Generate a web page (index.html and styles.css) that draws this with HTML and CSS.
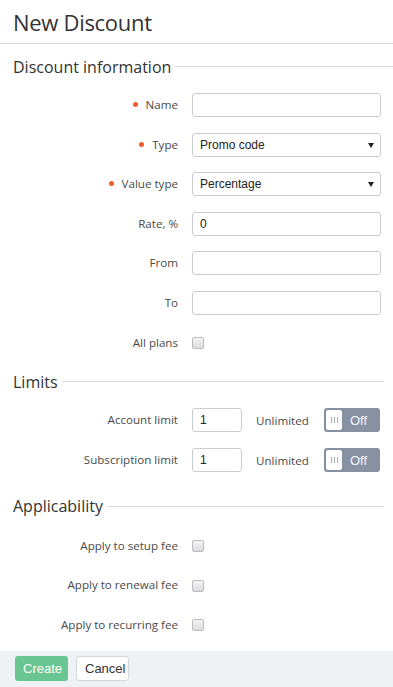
FILE: index.html
```html
<!DOCTYPE html>
<html lang="en">

<head>
    <meta charset="UTF-8">
    <link rel="stylesheet" href="styles.css">
    <title>New Discount</title>
</head>

<body>
    <div class="page-header">
        <h1>New Discount</h1>
    </div>

    <form class="discount-form">
        <div class="section">
            <div class="legend legend-wide"><span>Discount information</span></div>

            <div class="row">
                <label class="required" for="name">Name</label>
                <input type="text" id="name" name="name">
            </div>
            <div class="row">
                <label class="required" for="type">Type</label>
                <div class="select-wrap">
                    <select id="type" name="type">
                        <option>Promo code</option>
                    </select>
                </div>
            </div>
            <div class="row">
                <label class="required" for="value_type">Value type</label>
                <div class="select-wrap">
                    <select id="value_type" name="value_type">
                        <option>Percentage</option>
                    </select>
                </div>
            </div>
            <div class="row">
                <label for="rate">Rate, %</label>
                <input type="text" id="rate" name="rate" value="0">
            </div>
            <div class="row">
                <label for="from">From</label>
                <input type="text" id="from" name="from">
            </div>
            <div class="row">
                <label for="to">To</label>
                <input type="text" id="to" name="to">
            </div>
            <div class="row">
                <label for="all_plans">All plans</label>
                <input type="checkbox" id="all_plans" name="all_plans">
            </div>
        </div>

        <div class="section">
            <div class="legend legend-limits"><span>Limits</span></div>

            <div class="row limit-row">
                <label for="account_limit">Account limit</label>
                <div class="limit">
                    <input type="text" id="account_limit" name="account_limit" value="1">
                    <span class="unlimited">Unlimited</span>
                    <div class="toggle"><span class="knob"><i></i><i></i><i></i></span><span class="toggle-text">Off</span></div>
                </div>
            </div>
            <div class="row limit-row">
                <label for="subscription_limit">Subscription limit</label>
                <div class="limit">
                    <input type="text" id="subscription_limit" name="subscription_limit" value="1">
                    <span class="unlimited">Unlimited</span>
                    <div class="toggle"><span class="knob"><i></i><i></i><i></i></span><span class="toggle-text">Off</span></div>
                </div>
            </div>
        </div>

        <div class="section">
            <div class="legend legend-apply"><span>Applicability</span></div>

            <div class="row">
                <label for="setup_fee">Apply to setup fee</label>
                <input type="checkbox" id="setup_fee" name="setup_fee">
            </div>
            <div class="row">
                <label for="renewal_fee">Apply to renewal fee</label>
                <input type="checkbox" id="renewal_fee" name="renewal_fee">
            </div>
            <div class="row">
                <label for="recurring_fee">Apply to recurring fee</label>
                <input type="checkbox" id="recurring_fee" name="recurring_fee">
            </div>
        </div>

        <div class="form-footer">
            <button type="submit" class="btn btn-create">Create</button>
            <button type="button" class="btn btn-cancel">Cancel</button>
        </div>
    </form>
</body>

</html>
```

FILE: styles.css
```css
body {
    margin: 0;
    font-family: "Open Sans", Arial, sans-serif;
    color: #4a4a4a;
    background: #fff;
}

.page-header {
    height: 44px;
    box-sizing: border-box;
    padding: 7px 13px 0;
    border-bottom: 1px solid #d8dce2;
}

h1 {
    margin: 0;
    font-size: 22px;
    line-height: 30px;
    font-weight: 400;
    color: #333;
    letter-spacing: -0.3px;
}

.section {
    padding: 0 12px 0 13px;
}

.legend {
    display: flex;
    align-items: center;
    height: 24px;
    font-size: 16px;
    color: #333;
}

.legend::after {
    content: "";
    flex: 1;
    height: 1px;
    background: #d8dce2;
    margin-left: 4px;
}

.legend-wide {
    margin-top: 10.5px;
    margin-right: -12px;
}

.legend-limits {
    margin-top: 15.4px;
    margin-right: -3px;
}

.legend-apply {
    margin-top: 22px;
    margin-right: -3px;
}

.legend + .row {
    margin-top: 14.5px;
}

.legend-apply + .row {
    margin-top: 15.2px;
}

.row {
    display: grid;
    grid-template-columns: 165px 1fr;
    column-gap: 14px;
    align-items: center;
    height: 24px;
    margin-top: 15.6px;
}

.limit-row {
    margin-top: 16px;
}

.row label {
    text-align: right;
    font-size: 11.6px;
    line-height: 16px;
}

.required::before {
    content: "";
    display: inline-block;
    width: 5px;
    height: 5px;
    border-radius: 50%;
    background: #f15a2b;
    margin-right: 8px;
    vertical-align: 2px;
}

input[type="text"],
select {
    box-sizing: border-box;
    width: 189px;
    height: 24px;
    padding: 0 7px;
    border: 1px solid #c9cdd2;
    border-radius: 3px;
    font-family: "Liberation Sans", Arial, sans-serif;
    font-size: 12px;
    color: #222;
    background: #fff;
    outline: none;
}

.select-wrap {
    position: relative;
    width: 189px;
}

select {
    -webkit-appearance: none;
    appearance: none;
    display: block;
}

.select-wrap::after {
    content: "";
    position: absolute;
    right: 7px;
    top: 10px;
    border-left: 3px solid transparent;
    border-right: 3px solid transparent;
    border-top: 5px solid #222;
    pointer-events: none;
}

input[type="checkbox"] {
    -webkit-appearance: none;
    appearance: none;
    box-sizing: border-box;
    width: 12px;
    height: 12px;
    margin: 1px 0 0;
    border: 1px solid #b9bdc2;
    border-radius: 2px;
    background: linear-gradient(#f4f4f4, #dcdcdc);
}

.limit {
    display: flex;
    align-items: center;
}

.limit input[type="text"] {
    width: 50px;
    margin-right: 14px;
}

.unlimited {
    font-size: 11.6px;
    width: 68px;
}

.toggle {
    display: flex;
    align-items: center;
    box-sizing: border-box;
    width: 56px;
    height: 24px;
    padding: 0 2px;
    border-radius: 3px;
    background: #8891a1;
}

.knob {
    display: flex;
    justify-content: center;
    align-items: center;
    gap: 2px;
    width: 16px;
    height: 20px;
    border-radius: 2px;
    background: #fff;
}

.knob i {
    width: 1px;
    height: 6px;
    background: #a8aeb8;
}

.toggle-text {
    margin-left: 8px;
    font-family: "Liberation Sans", Arial, sans-serif;
    font-size: 13px;
    color: #f4f5f7;
}

.form-footer {
    margin-top: 13.7px;
    height: 37px;
    box-sizing: border-box;
    padding: 5px 15px 0;
    background: #eff2f5;
    display: flex;
    align-items: flex-start;
    gap: 8px;
}

.btn {
    height: 25px;
    padding: 0 8px;
    border-radius: 3px;
    font-family: "Liberation Sans", Arial, sans-serif;
    font-size: 13px;
    cursor: pointer;
}

.btn-create {
    width: 53px;
    border: none;
    background: #69c591;
    color: #fff;
}

.btn-cancel {
    width: 53px;
    border: 1px solid #d3d6da;
    background: #fff;
    color: #333;
}
```
